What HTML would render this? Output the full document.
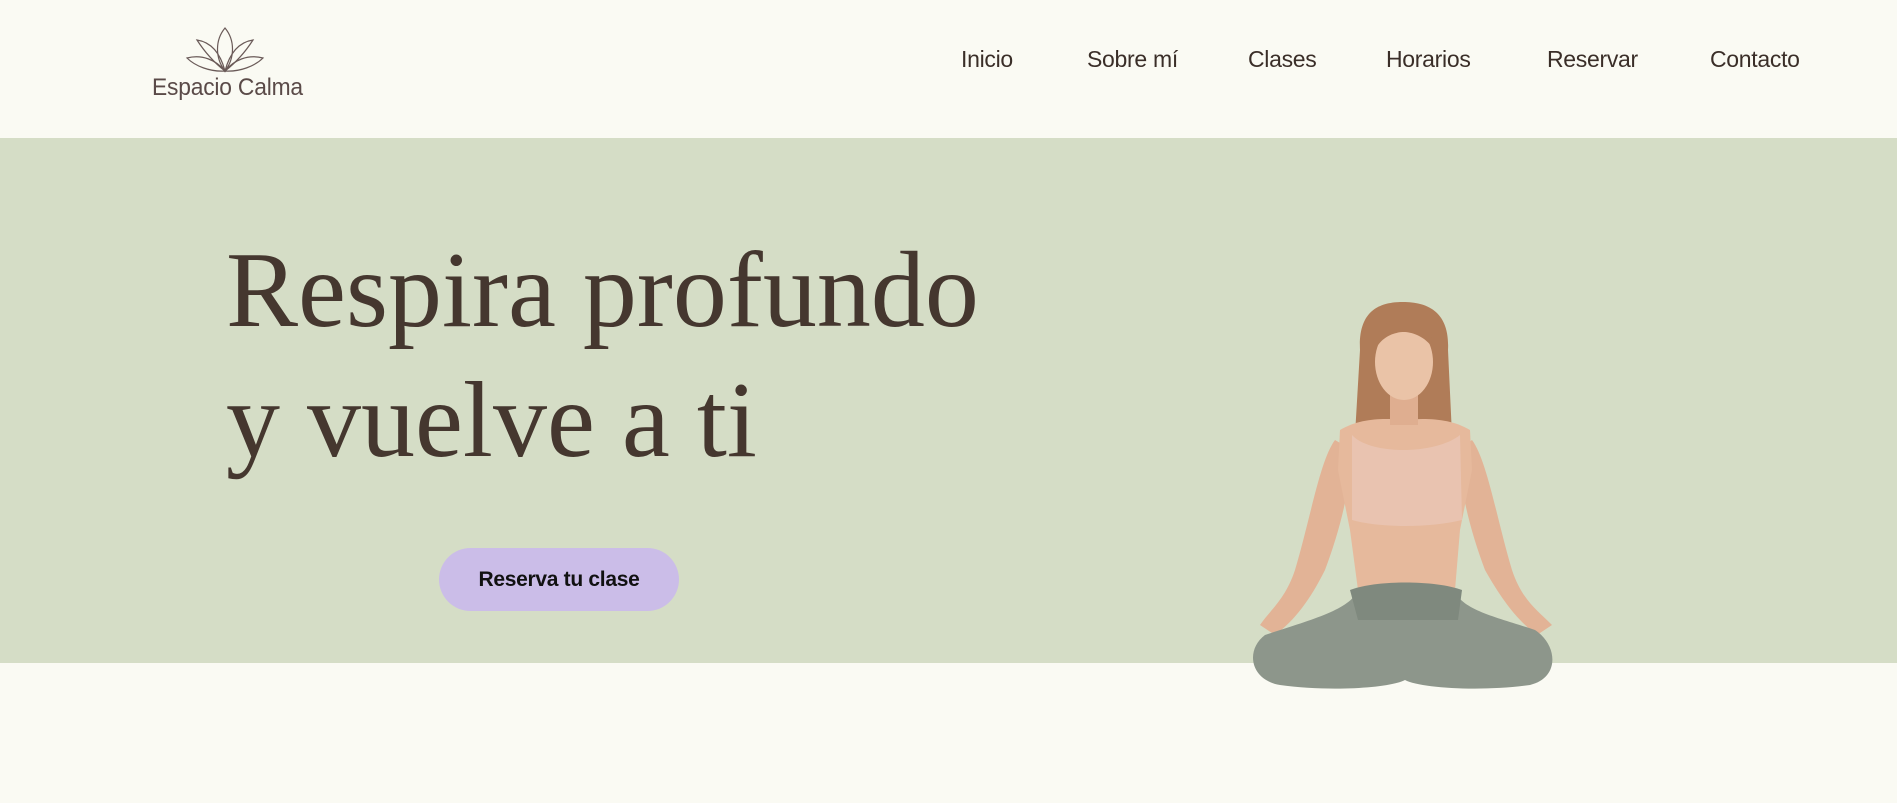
<!DOCTYPE html>
<html><head><meta charset="utf-8"><style>
*{margin:0;padding:0;box-sizing:border-box}
body{width:1897px;height:803px;background:#fafaf3;position:relative;overflow:hidden;font-family:"Liberation Sans",sans-serif;color:#3d302a}
.hdr{position:absolute;left:0;top:0;width:1897px;height:138px;background:#fafaf3}
.hero{position:absolute;left:0;top:138px;width:1897px;height:525px;background:#d5ddc6}
.nav{position:absolute;top:46px;font-size:23px;color:#3a2e28;letter-spacing:-0.3px}
.logo{position:absolute;left:152px;top:74px;font-size:24px;font-weight:300;color:#5a4a48;letter-spacing:-0.2px;transform:scaleX(0.95);transform-origin:left}
h1{position:absolute;left:226px;font-family:"Liberation Serif",serif;font-weight:normal;font-size:108px;color:#45372f;line-height:1;white-space:nowrap}
.btn{position:absolute;left:439px;top:548px;width:240px;height:63px;border-radius:32px;background:#cbbde8;color:#111;font-weight:bold;font-size:21px;display:flex;align-items:center;justify-content:center;letter-spacing:-0.3px}
</style></head><body>
<div class="hdr"></div>
<div class="hero"></div>
<svg style="position:absolute;left:180px;top:24px" width="90" height="52" viewBox="0 0 90 52" fill="none" stroke="#6a5a58" stroke-width="1.2">
<path d="M45 4 C35 16 35 34 45 47 C55 34 55 16 45 4Z"/>
<path d="M45 47 C36 40 26 30 17 16 C30 18 40 28 45 47Z"/>
<path d="M45 47 C54 40 64 30 73 16 C60 18 50 28 45 47Z"/>
<path d="M45 47 C30 48 15 42 7 34 C22 30 36 36 45 47Z"/>
<path d="M45 47 C60 48 75 42 83 34 C68 30 54 36 45 47Z"/>
</svg>
<div class="logo">Espacio Calma</div>
<div class="nav" style="left:961px">Inicio</div>
<div class="nav" style="left:1087px">Sobre mí</div>
<div class="nav" style="left:1248px">Clases</div>
<div class="nav" style="left:1386px">Horarios</div>
<div class="nav" style="left:1547px">Reservar</div>
<div class="nav" style="left:1710px">Contacto</div>
<h1 style="top:237px">Respira profundo</h1>
<h1 style="top:367px">y vuelve a ti</h1>
<div class="btn">Reserva tu clase</div>
<svg style="position:absolute;left:1240px;top:290px" width="330" height="410" viewBox="0 0 330 410">
<path d="M120 60 C118 20 140 12 163 12 C188 12 210 22 208 60 L212 145 L115 145Z" fill="#b07c58"/>
<path d="M95 150 C80 170 70 230 55 280 C45 310 30 320 20 335 L35 345 C55 330 70 310 85 280 C100 240 110 200 112 160Z" fill="#e2b396"/>
<path d="M232 150 C247 170 257 230 272 280 C282 310 297 320 312 335 L297 345 C277 330 262 310 245 280 C230 240 220 200 218 160Z" fill="#e2b396"/>
<path d="M100 140 C120 128 145 128 163 130 C185 128 210 128 230 140 L232 180 L220 240 L215 300 L118 300 L110 240 L98 180Z" fill="#e6b99c"/>
<rect x="150" y="100" width="28" height="35" fill="#dfae90"/>
<ellipse cx="164" cy="72" rx="29" ry="38" fill="#eac3a7"/>
<path d="M135 60 C138 35 150 28 164 28 C180 28 192 36 194 60 C185 45 170 42 164 42 C155 42 142 46 135 60Z" fill="#b07c58"/>
<path d="M112 145 C130 165 195 165 220 145 L222 230 C190 238 140 238 112 230Z" fill="#e9c3b0"/>
<path d="M118 300 C110 320 70 330 25 345 C5 360 10 390 40 395 C90 402 150 398 165 390 C180 398 240 402 290 395 C320 388 318 355 295 340 C260 328 220 320 215 300Z" fill="#8d968b"/>
<path d="M110 300 C135 290 195 290 222 300 L218 330 L118 330Z" fill="#7f897e"/>
</svg>
</body></html>
